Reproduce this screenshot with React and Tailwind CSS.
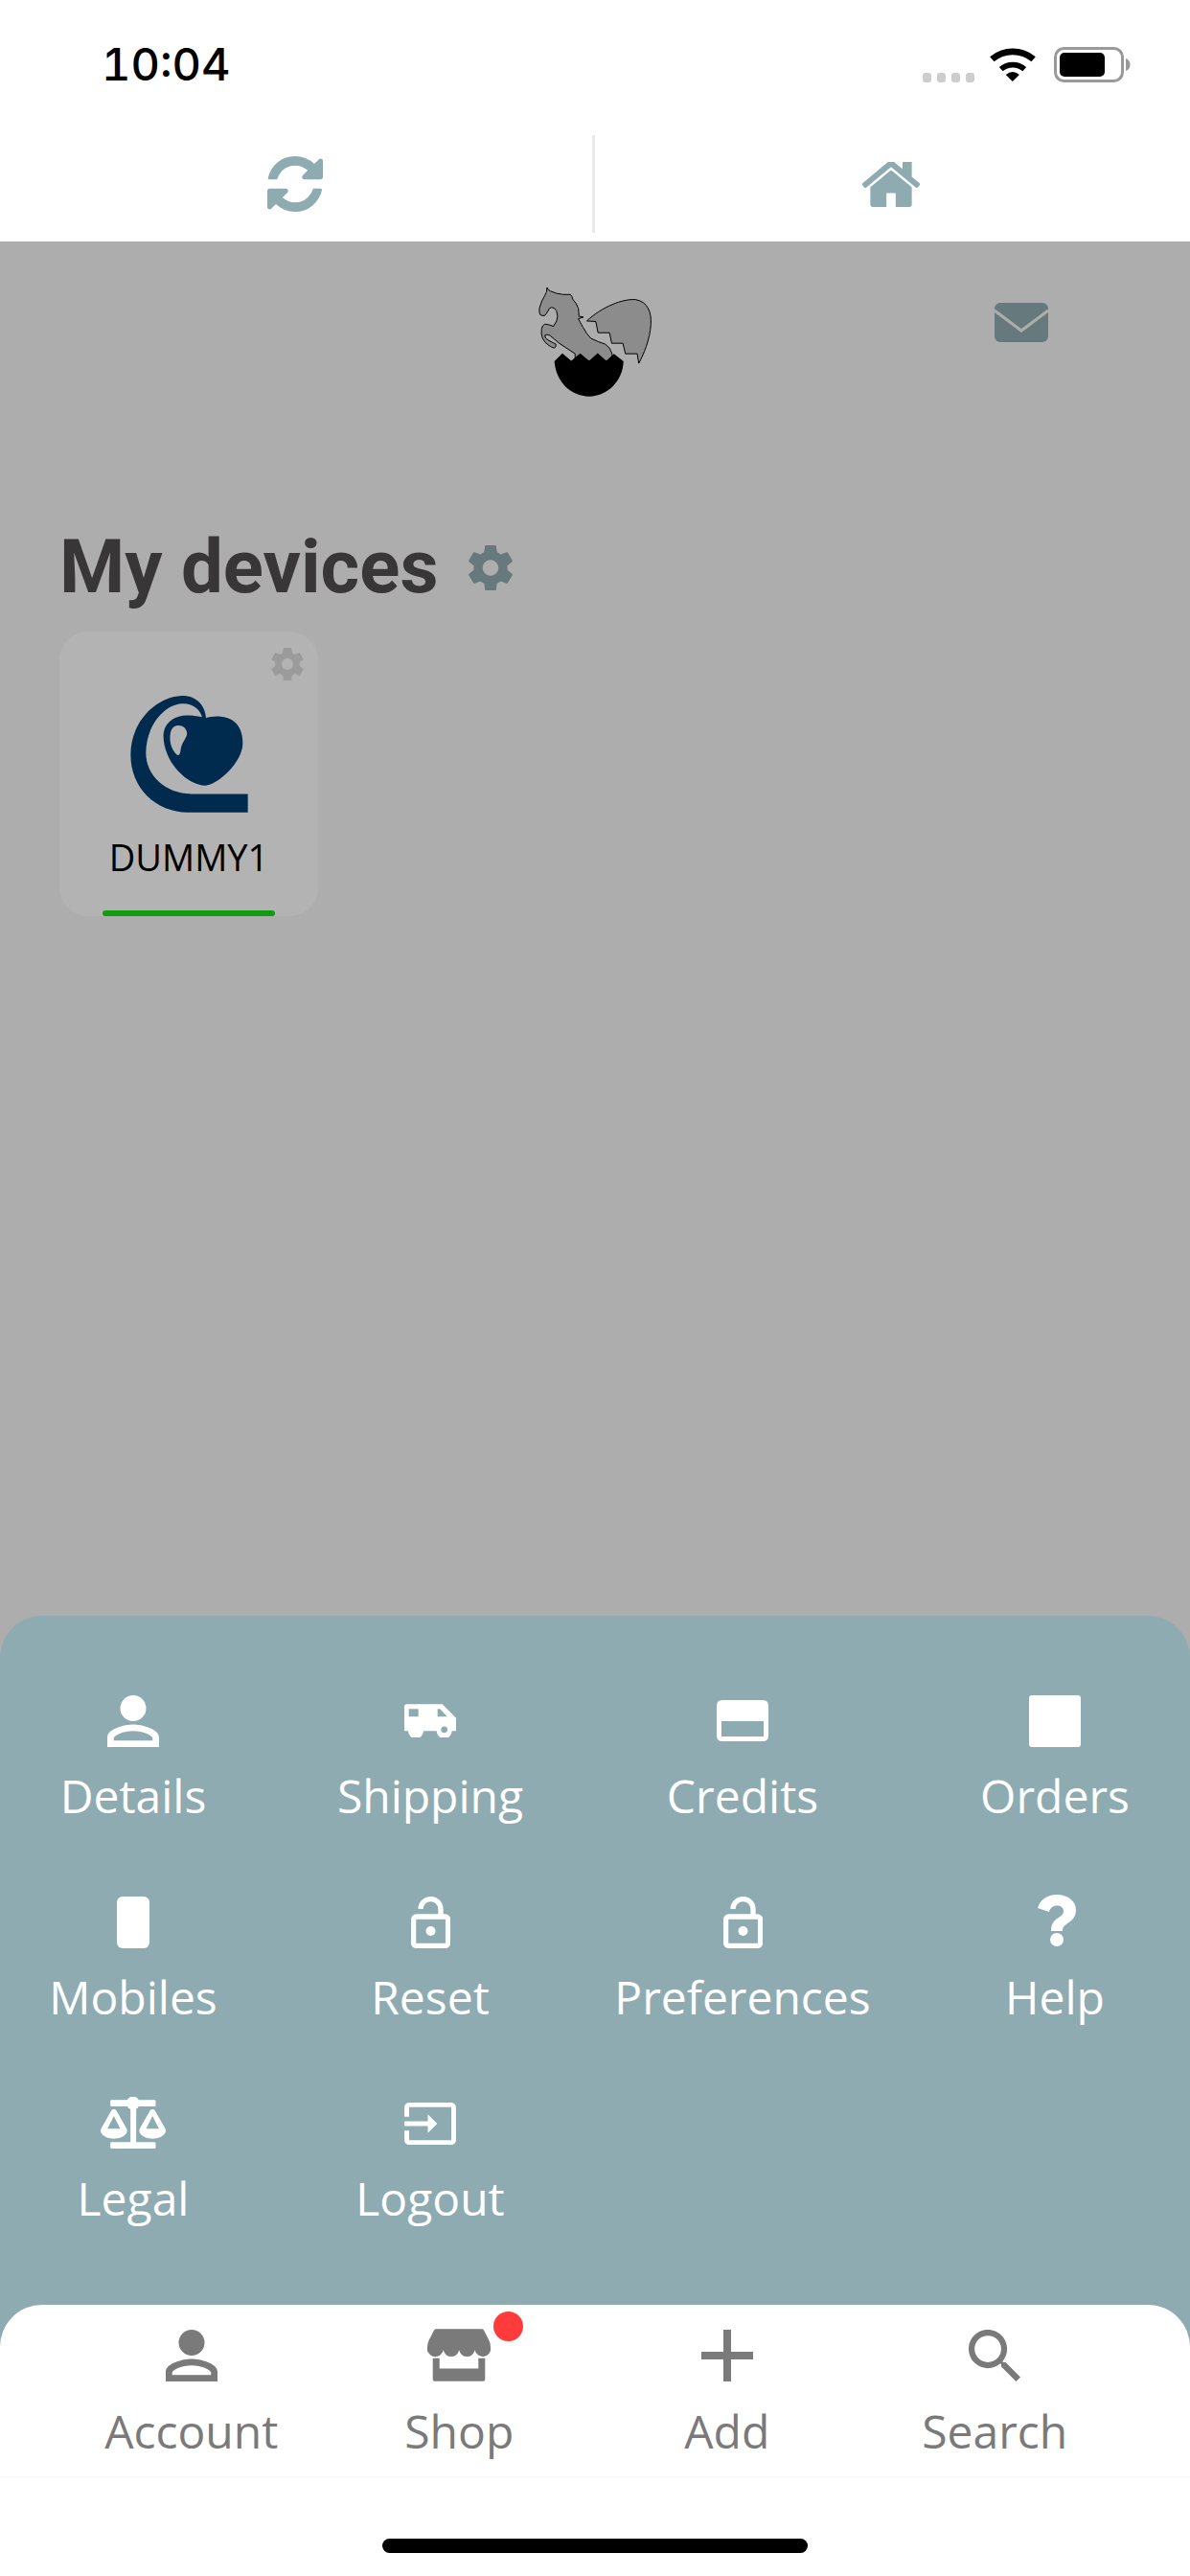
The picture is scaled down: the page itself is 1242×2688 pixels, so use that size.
import { Fragment } from 'react';

const GEAR = 'M19.43 12.98c.04-.32.07-.64.07-.98s-.03-.66-.07-.98l2.11-1.65c.19-.15.24-.42.12-.64l-2-3.46c-.12-.22-.39-.3-.61-.22l-2.49 1c-.52-.4-1.08-.73-1.69-.98l-.38-2.65C14.46 2.18 14.25 2 14 2h-4c-.25 0-.46.18-.49.42l-.38 2.65c-.61.25-1.17.59-1.69.98l-2.49-1c-.23-.09-.49 0-.61.22l-2 3.46c-.13.22-.07.49.12.64l2.11 1.65c-.04.32-.07.65-.07.98s.03.66.07.98l-2.11 1.65c-.19.15-.24.42-.12.64l2 3.46c.12.22.39.3.61.22l2.49-1c.52.4 1.08.73 1.69.98l.38 2.65c.03.24.24.42.49.42h4c.25 0 .46-.18.49-.42l.38-2.65c.61-.25 1.17-.59 1.69-.98l2.49 1c.23.09.49 0 .61-.22l2-3.46c.12-.22.07-.49-.12-.64l-2.11-1.65zM12 15.5c-1.93 0-3.5-1.57-3.5-3.5s1.57-3.5 3.5-3.5 3.5 1.57 3.5 3.5-1.57 3.5-3.5 3.5z';

const Gear = ({ className }) => (
  <svg viewBox="2.3 2 19.4 20" className={className} fill="currentColor">
    <path d={GEAR} />
  </svg>
);

const PersonIcon = () => (
  <svg viewBox="4 4 16 16" className="w-[54px] h-[54px]" fill="currentColor">
    <circle cx="12" cy="8" r="4" />
    <path fillRule="evenodd" d="M12 13c-2.67 0-8 1.34-8 4v3h16v-3c0-2.66-5.33-4-8-4zm0 2c2.97 0 5.8 1.3 6 2.2v.8H6v-.8c.2-.9 3.03-2.2 6-2.2z" />
  </svg>
);

const TruckIcon = () => (
  <svg viewBox="0 0 162 104" className="w-[54px] h-[35px]" fill="currentColor">
    <path fillRule="evenodd" d="M8 0H119L162 44V84H149A24 24 0 0 1 101 84H60A24 24 0 0 1 12 84H0V8Q0 0 8 0zM14 15V39H44V15zM104 15V39H134L112 15zM125 70A10 10 0 1 0 125 90A10 10 0 1 0 125 70z" />
  </svg>
);

const CardIcon = () => (
  <svg viewBox="0 0 54 43" className="w-[54px] h-[43px]" fill="currentColor">
    <path fillRule="evenodd" d="M6 0H48Q54 0 54 6V37Q54 43 48 43H6Q0 43 0 37V6Q0 0 6 0zM5 22V38H49V22z" />
  </svg>
);

const LockIcon = () => (
  <svg viewBox="0 0 41 54" className="w-[41px] h-[54px]" fill="none" stroke="currentColor" strokeWidth="5.3">
    <rect x="2.6" y="21" width="36" height="30.4" rx="3" />
    <path d="M10 13a10.5 10.5 0 0 1 21 0v8" />
    <circle cx="20.5" cy="36" r="5" fill="currentColor" stroke="none" />
  </svg>
);

const QuestionIcon = () => (
  <svg viewBox="0 0 40 54" className="w-[40px] h-[54px] mb-[4px] ml-[3px]" fill="currentColor">
    <path d="M20 0C31 0 40 6.500 40 16C40 24 35 27.500 30.500 30.500C27 33 26 34.500 26 38H14C14 31.500 16 28 21 24.500C25 21.800 27 20.500 27 17C27 13.500 24 11.500 20 11.500C16 11.500 13 14 12 18L0 14C2.500 5.500 10 0 20 0z" />
    <circle cx="20" cy="47" r="7" />
  </svg>
);

const ScaleIcon = () => (
  <svg viewBox="0 0 203 162" className="w-[68px] h-[54px] mb-[2px]" fill="currentColor">
    <rect x="30" y="10" width="142" height="20" rx="4" />
    <circle cx="101" cy="20" r="21" />
    <rect x="93" y="30" width="18" height="115" />
    <rect x="30" y="142" width="142" height="20" rx="4" />
    <path fillRule="evenodd" d="M41 39C45 39 48 41 50 45L81 100C84 106 82 112 78 117C70 126 55 131 41 131C27 131 12 126 4 117C0 112 -2 106 1 100L32 45C34 41 37 39 41 39zM41 60L21 100H61z" />
    <path fillRule="evenodd" transform="translate(121 0)" d="M41 39C45 39 48 41 50 45L81 100C84 106 82 112 78 117C70 126 55 131 41 131C27 131 12 126 4 117C0 112 -2 106 1 100L32 45C34 41 37 39 41 39zM41 60L21 100H61z" />
  </svg>
);

const InputIcon = () => (
  <svg viewBox="1 3 22 18" className="w-[54px] h-[44px]" fill="currentColor">
    <path d="M21 3.010H3c-1.100 0-2 .9-2 2V9h2V4.990h18v14.030H3V15H1v4.010c0 1.100.9 1.980 2 1.980h18c1.100 0 2-.88 2-1.980v-14c0-1.110-.9-2-2-2zM11 16l4-4-4-4v3H1v2h10v3z" />
  </svg>
);

const StoreIcon = () => (
  <svg viewBox="0 0 197 163" className="w-[66px] h-[55px]" fill="currentColor">
    <path d="M28 0H169Q174 0 176 4L192 35Q197 44 197 56A25 25 0 0 1 148 66A25 25 0 0 1 99 66A25 25 0 0 1 50 66A25 25 0 0 1 0 56Q0 44 5 35L21 4Q23 0 28 0z" />
    <path d="M17 91H38V123H159V91H180V157Q180 163 174 163H23Q17 163 17 157z" />
  </svg>
);

const PlusIcon = () => (
  <svg viewBox="0 0 54 54" className="w-[54px] h-[54px]" fill="currentColor">
    <path d="M23 0h8v23h23v8H31v23h-8V31H0v-8h23z" />
  </svg>
);

const SearchIcon = () => (
  <svg viewBox="3 3 17.490 17.490" className="w-[54px] h-[54px]" fill="currentColor">
    <path d="M15.500 14h-.79l-.28-.27C15.410 12.590 16 11.110 16 9.500 16 5.910 13.090 3 9.500 3S3 5.910 3 9.500 5.910 16 9.500 16c1.610 0 3.090-.59 4.230-1.570l.27.28v.79l5 4.990L20.490 19l-4.990-5zm-6 0C7.010 14 5 11.990 5 9.500S7.010 5 9.500 5 14 7.010 14 9.500 11.990 14 9.500 14z" />
  </svg>
);

const menuItems = [
  { label: 'Details', icon: <PersonIcon /> },
  { label: 'Shipping', icon: <TruckIcon /> },
  { label: 'Credits', icon: <CardIcon /> },
  { label: 'Orders', icon: <div className="w-[54px] h-[54px] rounded-[3px] bg-white" /> },
  { label: 'Mobiles', icon: <div className="w-[34px] h-[54px] rounded-[6px] bg-white" /> },
  { label: 'Reset', icon: <LockIcon /> },
  { label: 'Preferences', icon: <LockIcon /> },
  { label: 'Help', icon: <QuestionIcon /> },
  { label: 'Legal', icon: <ScaleIcon /> },
  { label: 'Logout', icon: <InputIcon /> },
];

const tabs = [
  { label: 'Account', icon: <PersonIcon /> },
  { label: 'Shop', icon: <StoreIcon />, badge: true },
  { label: 'Add', icon: <PlusIcon /> },
  { label: 'Search', icon: <SearchIcon /> },
];

const StatusBar = () => (
  <div className="h-[141px] bg-white flex items-start justify-between pl-[106px] pr-[62px] pt-[42px]">
    <span className="text-[47px] leading-[50px] font-medium tabular-nums text-black font-['Inter',sans-serif]">10:04</span>
    <div className="flex items-start pt-[7px]">
      <div className="flex gap-[6px] mt-[27px] mr-[16px]">
        <div className="w-[9px] h-[10px] rounded-[3px] bg-[#cdcdcd]" />
        <div className="w-[9px] h-[10px] rounded-[3px] bg-[#cdcdcd]" />
        <div className="w-[9px] h-[10px] rounded-[3px] bg-[#cdcdcd]" />
        <div className="w-[9px] h-[10px] rounded-[3px] bg-[#cdcdcd]" />
      </div>
      <svg viewBox="0 0 143 107" className="w-[48px] h-[36px] mr-[19px]" fill="none" stroke="black">
        <path strokeWidth="20" d="M7 38A100 100 0 0 1 136 38" />
        <path strokeWidth="17" d="M35 69A56 56 0 0 1 108 69" />
        <path fill="black" stroke="none" d="M71 107L50 86Q71 68 92 86z" />
      </svg>
      <svg viewBox="0 0 80 37" className="w-[80px] h-[37px]">
        <rect x="1.500" y="1.500" width="70" height="34" rx="9" fill="none" stroke="#999999" strokeWidth="3" />
        <rect x="6" y="6" width="47" height="25" rx="5" fill="black" />
        <path d="M75 12c3 1 4.500 3.500 4.500 6.500S78 24 75 25z" fill="#999999" />
      </svg>
    </div>
  </div>
);

const TopBar = () => (
  <div className="flex h-[111px] pb-[9px] bg-white text-[#8eabb1]">
    <div className="w-[618px] flex items-center justify-center pr-[3px]">
      <svg viewBox="0 0 1536 1536" className="w-[58px] h-[58px]" fill="currentColor">
        <path d="M1511 928q0 5-1 7-64 268-268 434.500t-478 166.500q-146 0-282.500-55t-243.500-157l-129 129q-19 19-45 19t-45-19-19-45v-448q0-26 19-45t45-19h448q26 0 45 19t19 45-19 45l-137 137q71 66 161 102t187 36q134 0 250-65t186-179q11-17 53-117 8-23 30-23h192q13 0 22.500 9.500t9.500 22.500zm25-800v448q0 26-19 45t-45 19h-448q-26 0-45-19t-19-45 19-45l138-138q-148-137-349-137-134 0-250 65t-186 179q-11 17-53 117-8 23-30 23h-199q-13 0-22.500-9.500t-9.500-22.500v-7q65-268 270-434.500t480-166.500q146 0 284 55.500t245 156.500l130-129q19-19 45-19t45 19 19 45z" />
      </svg>
    </div>
    <div className="w-[3px] bg-[#e8eaec]" />
    <div className="flex-1 flex items-center justify-center pr-[3px]">
      <svg viewBox="97 287 1598 1249" className="w-[60px] h-[47px]" fill="currentColor">
        <path d="M1472 992v480q0 26-19 45t-45 19h-384v-384h-256v384h-384q-26 0-45-19t-19-45v-480q0-1 .5-3t.5-3l575-474 575 474q1 2 1 6zm223-69l-62 74q-8 9-21 11h-3q-13 0-21-7l-692-577-692 577q-12 8-24 7-13-2-21-11l-62-74q-8-10-7-23.500t11-21.500l719-599q32-26 76-26t76 26l244 204v-195q0-14 9-23t23-9h192q14 0 23 9t9 23v408l219 182q10 8 11 21.500t-7 23.500z" />
      </svg>
    </div>
  </div>
);

const Logo = () => (
  <svg viewBox="185 88 355 344" className="w-[118px] h-[115px]">
    <path
      fill="#8c8c8c"
      stroke="black"
      strokeWidth="3"
      strokeLinejoin="round"
      d="M212 90Q214 98 222 101Q240 110 262 112L285 112Q292 118 292 126Q305 140 310 155Q312 168 312 180L326 183L310 188Q316 200 325 215Q335 235 350 250Q375 262 395 268Q410 278 415 295L420 320H300L300 298L250 265Q235 252 220 240Q210 236 205 240Q205 250 215 255Q228 262 240 268Q240 278 235 280Q225 278 215 270Q204 262 198 250Q192 235 195 220Q197 208 205 205Q220 206 232 212Q245 195 245 180Q243 160 235 155Q225 150 220 155Q212 170 205 178Q195 180 190 175Q186 165 188 155Q195 130 205 115Q212 105 212 90z"
    />
    <path
      fill="#8c8c8c"
      stroke="black"
      strokeWidth="3"
      strokeLinejoin="round"
      d="M337 195C385 150 450 125 490 128C530 135 540 170 538 205C535 255 515 300 500 328L495 298L458 298L450 265L415 265L408 232L372 232L365 197z"
    />
    <path d="M235 322L260 297L288 320L316 297L344 320L371 296L398 320L422 298L452 322C450 385 400 432 345 432C285 432 240 385 235 322z" />
  </svg>
);

const DeviceLogo = () => (
  <svg viewBox="0 0 368 367" className="w-[123px] h-[122px]" fill="#002b4f">
    <path d="M368 366H180C80 366 0 290 0 185C0 85 75 5 160 0C205 -2 235 30 237 72H225C222 45 195 22 160 25C100 30 48 100 48 180C48 250 110 308 190 308H368z" />
    <path
      fillRule="evenodd"
      d="M237 70C260 62 352 50 352 150C352 210 270 282 235 282C180 282 103 210 103 125C103 85 140 62 175 62C205 62 225 68 237 70zM150 93C135 93 125 105 124 125C122 150 130 170 144 184C150 190 156 185 157 170C160 150 170 140 176 125C180 110 170 93 150 93z"
    />
  </svg>
);

const DeviceCard = () => (
  <div className="relative w-[270px] h-[297px] rounded-[30px] bg-[#b3b3b3] flex flex-col items-center pt-[67px]">
    <Gear className="absolute top-[17px] right-[15px] w-[34px] h-[34px] text-[#9b9b9b]" />
    <DeviceLogo />
    <span className="mt-[21px] text-[38px] leading-[50px] text-black font-['Open_Sans',sans-serif]">DUMMY1</span>
    <div className="absolute bottom-0 left-[45px] w-[180px] h-[6px] rounded-full bg-[#0f9d0f]" />
  </div>
);

export default function App() {
  return (
    <div className="w-[1242px] h-[2688px] flex flex-col overflow-hidden bg-[#adadad] font-['Open_Sans',sans-serif]">
      <StatusBar />
      <TopBar />

      {/* Page under the dimmed overlay */}
      <div className="flex-1 pt-[47px]">
        <div className="flex items-start">
          <div className="flex-1" />
          <Logo />
          <div className="flex-1 flex justify-end pt-[17px]">
            <svg viewBox="0 0 56 41" className="w-[56px] h-[41px] mr-[148px]">
              <rect width="56" height="41" rx="6" fill="#667a7d" />
              <path d="M0 8L28 29L56 8" fill="none" stroke="#adadad" strokeWidth="3" />
            </svg>
          </div>
        </div>

        <div className="flex items-center gap-[32px] pl-[62px] mt-[132px] h-[92px]">
          <h1 className="text-[78px] leading-[92px] font-bold text-[#383637] font-['Roboto',sans-serif]">My devices</h1>
          <Gear className="w-[46px] h-[47px] text-[#667a7d]" />
        </div>

        <div className="pl-[62px] mt-[21px]">
          <DeviceCard />
        </div>
      </div>

      {/* Slide-up account menu */}
      <div className="bg-[#8eabb1] rounded-t-[44px] pt-[69px]">
        <div className="grid grid-cols-[278px_282px_310px_282px] gap-x-[30px] h-[650px] content-start text-white">
          {menuItems.map((item) => (
            <div key={item.label} className="flex flex-col items-center h-[210px]">
              <div className="h-[81px] flex items-center justify-center">{item.icon}</div>
              <span className="text-[48px] leading-[66px] mt-[5px]">{item.label}</span>
            </div>
          ))}
        </div>

        <div className="bg-white rounded-t-[44px] h-[283px] flex flex-col">
          <div className="grid grid-cols-4 pl-[60px] pr-[64px] pt-[12px] h-[180px] border-b border-[#f7f7f7] text-[#7a7a7a]">
            {tabs.map((tab) => (
              <Fragment key={tab.label}>
                <div className="flex flex-col items-center">
                  <div className="relative h-[81px] flex items-center justify-center">
                    {tab.icon}
                    {tab.badge && <div className="absolute top-[-5px] right-[-34px] w-[31px] h-[31px] rounded-full bg-[#ff3b3b]" />}
                  </div>
                  <span className="text-[48px] leading-[66px] mt-[6px]">{tab.label}</span>
                </div>
              </Fragment>
            ))}
          </div>
          <div className="flex justify-center pt-[64px]">
            <div className="w-[444px] h-[15px] rounded-full bg-black" />
          </div>
        </div>
      </div>
    </div>
  );
}
